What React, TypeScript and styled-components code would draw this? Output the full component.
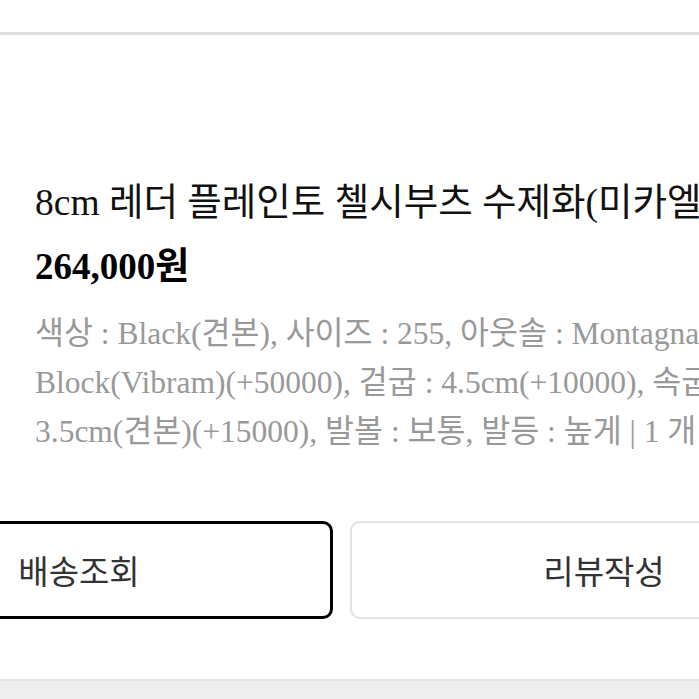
import styled, { createGlobalStyle } from "styled-components";

const GlobalStyle = createGlobalStyle`
  html, body {
    margin: 0;
    padding: 0;
    background: #ffffff;
    overflow: hidden;
  }
`;

const Page = styled.div`
  width: 699px;
  height: 699px;
  overflow: hidden;
  background: #ffffff;
  display: flex;
  flex-direction: column;
  padding-top: 32px;
  box-sizing: border-box;
`;

// the card runs past both edges of the viewport in the reference crop
const Card = styled.section`
  width: 1033px;
  margin-left: -175px;
  flex-shrink: 0;
  border-top: 3px solid #dddddd;
  background: #ffffff;
  padding: 143px 0 60px;
`;

const Info = styled.div`
  padding-left: 210px;
  font-family: "Liberation Serif", "Noto Sans CJK KR", serif;
`;

const Title = styled.h2`
  margin: 0;
  font-size: 37.5px;
  line-height: 50px;
  font-weight: 400;
  color: #111111;
  white-space: nowrap;
`;

const Price = styled.div`
  margin-top: 14px;
  font-size: 37px;
  line-height: 50px;
  font-weight: 700;
  color: #000000;
`;

const Options = styled.p`
  margin: 17px 0 0;
  font-size: 31.5px;
  line-height: 49px;
  color: #999999;
  word-break: keep-all;
`;

const ButtonRow = styled.div`
  display: grid;
  grid-template-columns: 1fr 1fr;
  gap: 17px;
  margin-top: 65px;
`;

const ActionButton = styled.button<{ $primary?: boolean }>`
  height: 98px;
  box-sizing: border-box;
  border: ${({ $primary }) => ($primary ? "3px solid #000000" : "2px solid #e2e2e2")};
  border-radius: 10px;
  background: #ffffff;
  font-family: "Noto Sans CJK KR", "Noto Sans", sans-serif;
  font-size: 33px;
  color: #333333;
  display: flex;
  align-items: center;
  justify-content: center;
  padding: 0;
`;

const BottomBand = styled.div`
  flex: 1;
  border-top: 2px solid #e4e4e4;
  background: #eeeeee;
`;

const options =
  "색상 : Black(견본), 사이즈 : 255, 아웃솔 : Montagna Block(Vibram)(+50000), 겉굽 : 4.5cm(+10000), 속굽 : 3.5cm(견본)(+15000), 발볼 : 보통, 발등 : 높게 | 1 개";

export default function App() {
  return (
    <>
      <GlobalStyle />
      <Page>
        <Card>
          <Info>
            <Title>8cm 레더 플레인토 첼시부츠 수제화(미카엘)</Title>
            <Price>264,000원</Price>
            <Options>{options}</Options>
          </Info>
          <ButtonRow>
            <ActionButton $primary>배송조회</ActionButton>
            <ActionButton>리뷰작성</ActionButton>
          </ButtonRow>
        </Card>
        <BottomBand />
      </Page>
    </>
  );
}
